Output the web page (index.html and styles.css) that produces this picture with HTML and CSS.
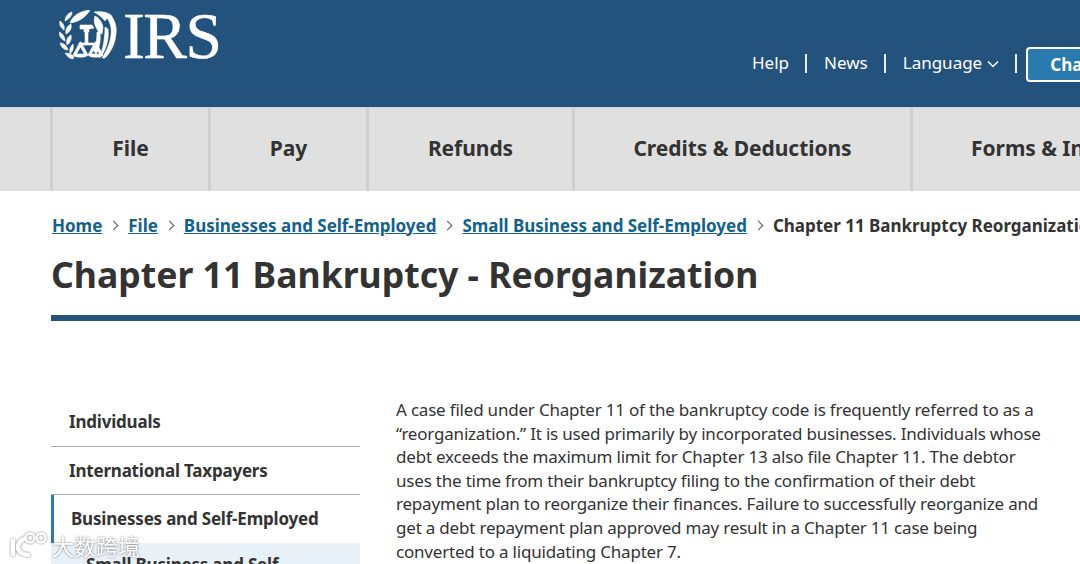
FILE: index.html
```html
<!DOCTYPE html>
<html lang="en">
<head>
<meta charset="utf-8">
<title>Chapter 11 Bankruptcy - Reorganization</title>
<link rel="stylesheet" href="styles.css">
</head>
<body>
<div class="page">
  <header class="masthead">
    <a class="logo" href="#">
      <svg class="seal" viewBox="0 0 58 50" width="58" height="50" aria-hidden="true">
        <g fill="#fff" stroke="#fff" stroke-width=".6">
          <path d="M31 0c-4 7-11 12-20 13 2-7 10-12 20-13z"/>
          <path d="M13 2c0 4-3 7-7 9 0-4 3-8 7-9z"/>
          <path d="M1 11c3 2 5 5 4 9-3-2-5-5-4-9z"/>
          <path d="M12 14c1 4-1 8-5 10-1-4 1-8 5-10z"/>
          <path d="M0 22c3 1 6 4 6 9-4-2-6-5-6-9z"/>
          <path d="M12 25c1 4-1 8-4 10-1-4 0-8 4-10z"/>
          <path d="M1 33c4 0 7 3 8 7-4 0-7-3-8-7z"/>
          <path d="M14 34c1 4 0 7-3 10-1-4 0-7 3-10z"/>
          <path d="M6 43c3 0 7 1 9 4l-1 2c-3 0-6-3-8-6z"/>
          <path d="M35 2c7-1 13 0 17 3 4 6 6 12 5 19-1 10-5 18-11 24h-3c4-6 8-14 9-23 1-7-1-13-4-17l-2 3c-3-4-7-7-11-9z"/>
          <path d="M36 6c4 2 7 6 8 11l-1 7-3-1-4-8c-1-3-1-6 0-9z"/>
          <path d="M46 17l3 2c1 9-1 18-6 26l-3 3c4-8 6-20 6-31z"/>
          <path d="M38 22l3 1c1 8-1 16-4 21l-2-3c2-6 3-12 3-19z"/>
          <path d="M21 15h12l2 3-5 1v3h-5v-3h-4z"/>
          <path d="M26 21h3v12h6v2H20v-2h6z"/>
          <path fill-rule="evenodd" d="M21 32h1l7 13c-2 3-13 3-15 0zm.500 5-4 7h8z"/>
          <path fill-rule="evenodd" d="M36 32h1l7 13c-2 3-13 3-15 0zm.500 5-4 7h8z"/>
        </g>
      </svg>
      <span class="wordmark">IRS</span>
    </a>
    <nav class="utility">
      <a href="#">Help</a><i class="pipe"></i>
      <a href="#">News</a><i class="pipe"></i>
      <a href="#" class="lang">Language
        <svg viewBox="0 0 12 8" width="12" height="8" aria-hidden="true"><path d="M1 1.500l5 5 5-5" fill="none" stroke="#fff" stroke-width="1.500"/></svg>
      </a><i class="pipe"></i>
      <a href="#" class="charities">Charities &amp; Nonprofits</a>
    </nav>
  </header>

  <nav class="tabs">
    <a class="tab t0" href="#"></a>
    <a class="tab t1" href="#">File</a>
    <a class="tab t1" href="#">Pay</a>
    <a class="tab t2" href="#">Refunds</a>
    <a class="tab t3" href="#">Credits &amp; Deductions</a>
    <a class="tab t4" href="#">Forms &amp; Instructions</a>
  </nav>

  <main class="main">
    <div class="crumbs">
      <a href="#">Home</a><i class="chev"></i>
      <a href="#">File</a><i class="chev"></i>
      <a href="#">Businesses and Self-Employed</a><i class="chev"></i>
      <a href="#">Small Business and Self-Employed</a><i class="chev"></i>
      <span>Chapter 11 Bankruptcy Reorganization</span>
    </div>
    <h1>Chapter 11 Bankruptcy - Reorganization</h1>
    <div class="rule"></div>
    <div class="cols">
      <aside class="side">
        <div class="item">Individuals</div>
        <div class="item second">International Taxpayers</div>
        <div class="item active">Businesses and Self-Employed</div>
        <div class="sub">Small Business and Self-Employed</div>
      </aside>
      <p class="copy">A case filed under Chapter 11 of the bankruptcy code is frequently referred to as a<br>“reorganization.” It is used primarily by incorporated businesses. Individuals whose<br>debt exceeds the maximum limit for Chapter 13 also file Chapter 11. The debtor<br>uses the time from their bankruptcy filing to the confirmation of their debt<br>repayment plan to reorganize their finances. Failure to successfully reorganize and<br>get a debt repayment plan approved may result in a Chapter 11 case being<br>converted to a liquidating Chapter 7.</p>
    </div>
  </main>

  <div class="watermark">
    <svg viewBox="0 0 44 28" width="44" height="28" aria-hidden="true">
      <g fill="none" stroke="#fff" stroke-width="4.500">
        <path d="M5 8v17"/>
        <path d="M19 6c-6 3-9 6-9 10 0 5 5 8 12 8"/>
        <circle cx="22" cy="7" r="4.500" stroke-width="2.500"/>
        <circle cx="33" cy="7" r="4.500" stroke-width="2.500"/>
      </g>
    </svg>
    <span>大数跨境</span>
  </div>
</div>
</body>
</html>
```

FILE: styles.css
```css
* { box-sizing: border-box; }
html, body { margin: 0; padding: 0; }
body { background: #fff; color: #333; font-family: "Noto Sans", "Open Sans", sans-serif; }
a { color: inherit; text-decoration: none; }
i { font-style: normal; }

.page { position: relative; width: 1080px; height: 564px; overflow: hidden; }

.masthead { height: 107px; background: #23527c; display: flex; justify-content: space-between; padding-left: 59px; }
.logo { display: flex; align-items: flex-start; gap: 6px; padding-top: 10px; color: #fff; height: 62px; }
.wordmark { font-family: "Liberation Serif", serif; font-size: 65.500px; line-height: 52px; letter-spacing: -1.500px; -webkit-text-stroke: .5px #fff; }

.utility { display: flex; align-items: center; height: 66px; margin-top: 29px; flex: none; width: 328px; color: #fff; font-size: 17px; white-space: nowrap; }
.pipe { width: 2px; height: 19px; margin: 2px 17px 0 16px; background: #e8eef3; flex: none; }
.lang { display: flex; align-items: center; gap: 5px; }
.lang svg { margin-top: 4px; }
.lang + .pipe { margin: 2px 9px 0 16px; }
.charities { flex: none; height: 35px; width: 140px; margin-top: 4px; padding-left: 22px; border: 2px solid #fff; border-radius: 4px 0 0 4px; background: #2a7aad; font-weight: 700; line-height: 31px; overflow: hidden; }

.tabs { height: 84px; background: #e0e0e0; display: flex; border-top: 1px solid #d4d4d4; }
.tab { flex: none; height: 83px; padding-bottom: 4px; display: flex; align-items: center; justify-content: center; font-size: 21px; font-weight: 700; color: #333; white-space: nowrap; border-right: 3px solid #cfcfcf; letter-spacing: -.05px; }
.t0 { width: 53px; }
.t1 { width: 158px; }
.t2 { width: 206px; }
.t3 { width: 338px; }
.t4 { width: 200px; justify-content: flex-start; padding-left: 58px; border-right: 0; }

.main { padding-left: 51px; }
.crumbs { display: flex; align-items: center; height: 20px; margin-top: 24px; padding-left: 1px; font-size: 17px; font-weight: 700; color: #333; white-space: nowrap; letter-spacing: -.02px; }
.crumbs a { color: #14618c; text-decoration: underline; }
.chev { width: 7px; height: 7px; flex: none; margin: 0 11px 0 8px; border-top: 1.500px solid #555; border-right: 1.500px solid #555; transform: rotate(45deg); }

h1 { margin: 14px 0 0; font-size: 35.600px; line-height: 50px; font-weight: 700; color: #333; white-space: nowrap; }
.rule { height: 6px; margin-top: 16px; background: #23527c; }

.cols { display: flex; margin-top: 77px; gap: 36px; }
.side { flex: none; width: 309px; font-size: 17px; font-weight: 700; color: #333; }
.item { height: 49px; padding: 12px 0 0 18px; line-height: 24px; border-bottom: 1px solid #aaa; letter-spacing: -.2px; white-space: nowrap; }
.item.second { height: 48px; }
.item.active { border-bottom: 0; border-left: 3px solid #2a7aad; padding: 12px 0 0 17px; height: 48px; }
.sub { background: #e8f0f8; padding: 10px 60px 0 35px; height: 60px; line-height: 24px; letter-spacing: -.2px; }
.copy { flex: none; width: 680px; margin: 0; font-size: 17px; line-height: 23.600px; color: #333; letter-spacing: -.2px; white-space: nowrap; }

.watermark { position: absolute; left: 8px; bottom: 5px; display: flex; align-items: center; gap: 0; color: #fff; font-family: "Noto Sans CJK SC", sans-serif; font-size: 22px; line-height: 28px; filter: drop-shadow(0 0 1px #777); }
```
